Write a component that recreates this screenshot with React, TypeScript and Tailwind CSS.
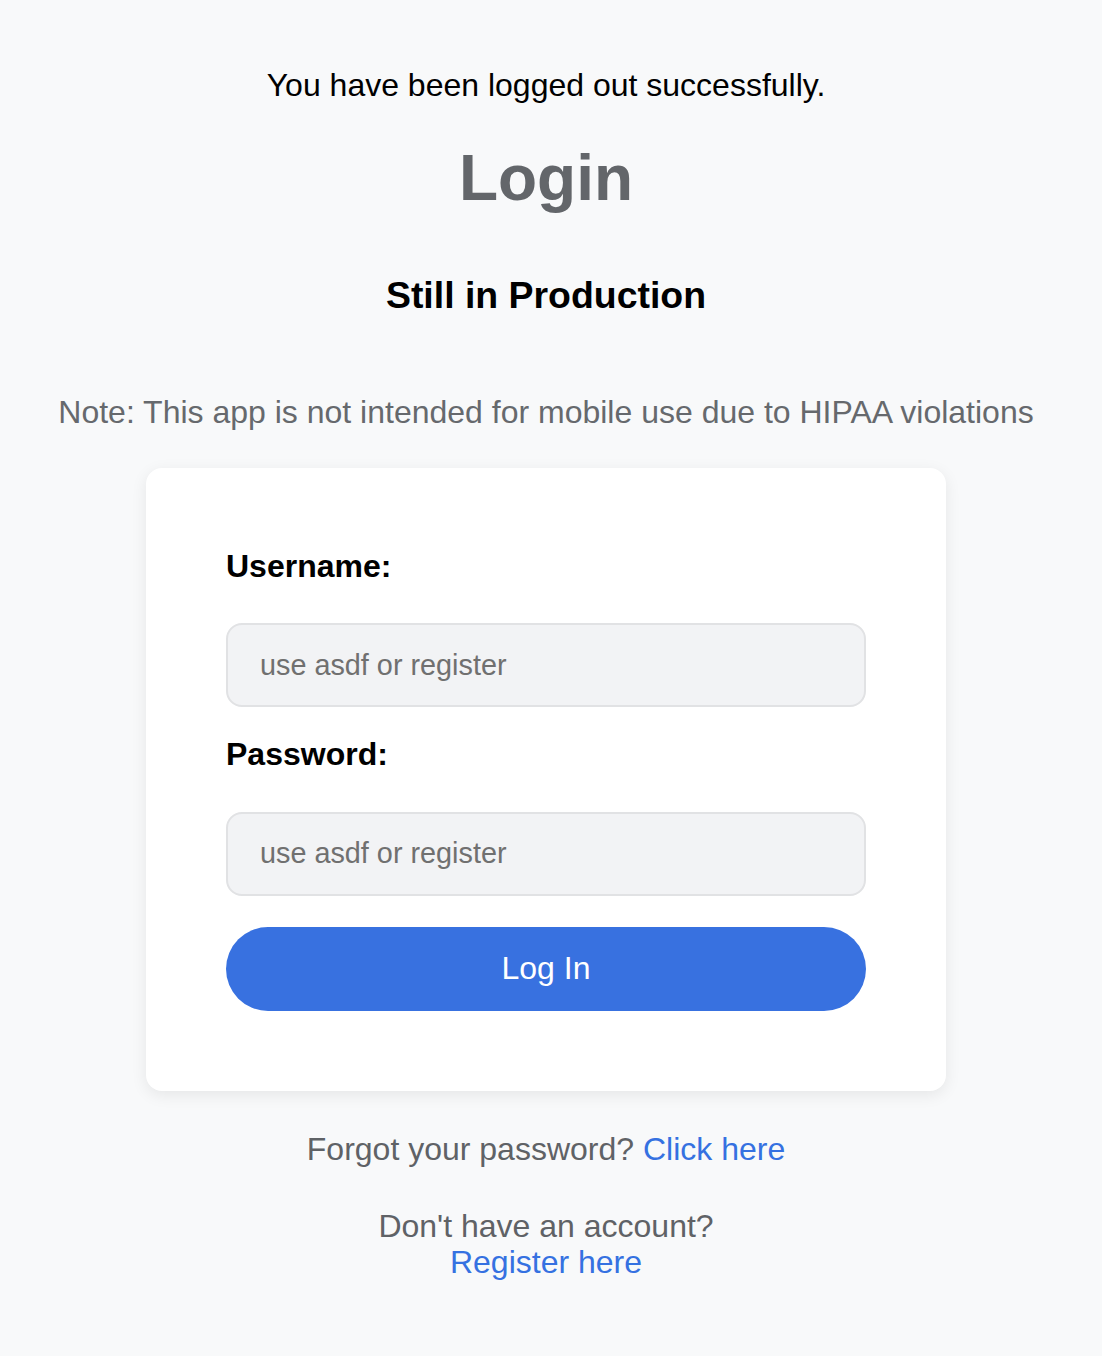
import { useState } from 'react';

const App = () => {
  const [username, setUsername] = useState('');
  const [password, setPassword] = useState('');

  return (
    <div
      className="min-h-[1356px] w-full bg-[#f8f9fa] flex flex-col items-center text-center pt-[67px] pb-[60px] pr-[10px]"
      style={{ fontFamily: '"Liberation Sans", Arial, Helvetica, sans-serif' }}
    >
      <p className="text-[32px] leading-[1.15] text-black">You have been logged out successfully.</p>

      <h1 className="mt-[38px] text-[64px] leading-[1.15] font-bold text-[#63666a]">Login</h1>

      <h3 className="mt-[59px] text-[37.44px] leading-[1.15] font-bold text-black">Still in Production</h3>

      <p className="mt-[77px] text-[32px] leading-[1.15] text-[#66696d]">
        Note: This app is not intended for mobile use due to HIPAA violations
      </p>

      <form
        className="mt-[37px] w-[800px] bg-white rounded-[16px] shadow-[0_4px_16px_rgba(0,0,0,0.08)] px-[80px] pt-[80px] pb-[80px] flex flex-col text-left"
        onSubmit={e => e.preventDefault()}
      >
        <label htmlFor="username" className="text-[32px] leading-[1.15] font-bold text-black">
          Username:
        </label>
        <input
          id="username"
          type="text"
          value={username}
          onChange={e => setUsername(e.target.value)}
          placeholder="use asdf or register"
          className="mt-[38px] h-[84px] w-full rounded-[16px] border-2 border-[#e1e2e4] bg-[#f2f3f5] px-[32px] text-[28.8px] text-black placeholder:text-[#707070] outline-none"
        />

        <label htmlFor="password" className="mt-[29px] text-[32px] leading-[1.15] font-bold text-black">
          Password:
        </label>
        <input
          id="password"
          type="password"
          value={password}
          onChange={e => setPassword(e.target.value)}
          placeholder="use asdf or register"
          className="mt-[39px] h-[84px] w-full rounded-[16px] border-2 border-[#e1e2e4] bg-[#f2f3f5] px-[32px] text-[28.8px] text-black placeholder:text-[#707070] outline-none"
        />

        <button
          type="submit"
          className="mt-[31px] h-[84px] w-full rounded-full bg-[#3871e0] text-white text-[32px] leading-[1.15]"
        >
          Log In
        </button>
      </form>

      <p className="mt-[40px] text-[32px] leading-[1.15] text-[#5f6266]">
        Forgot your password? <a href="#" className="text-[#3571e1]">Click here</a>
      </p>

      <p className="mt-[40px] text-[32px] leading-[1.15] text-[#5f6266]">
        Don't have an account?
        <br />
        <a href="#" className="text-[#3571e1]">Register here</a>
      </p>
    </div>
  );
};

export default App;
